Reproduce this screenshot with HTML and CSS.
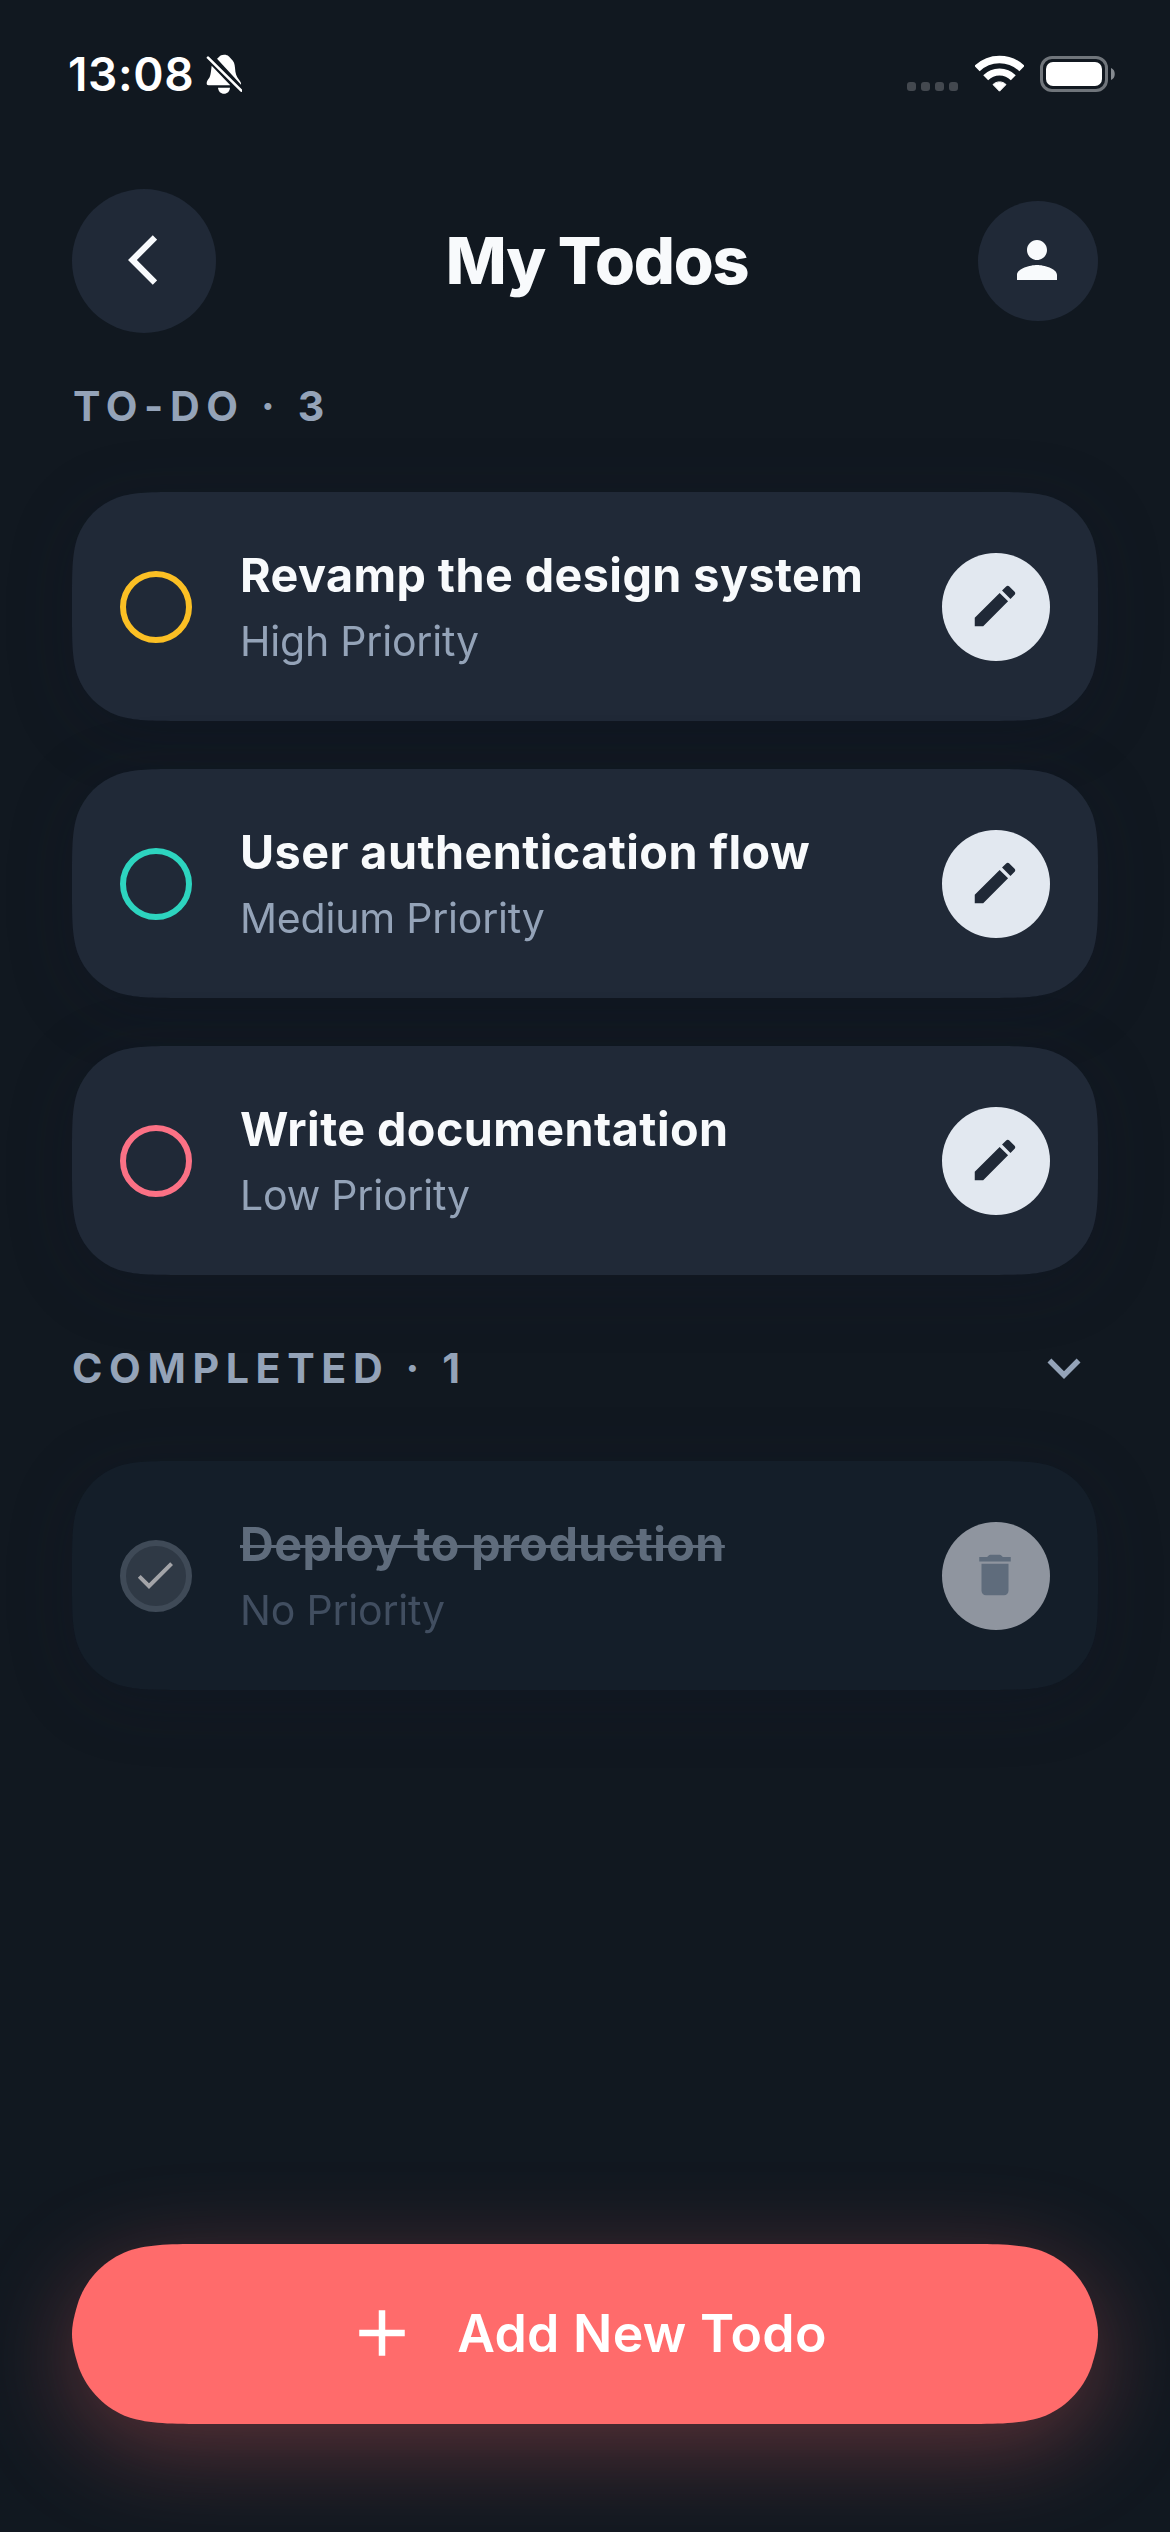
FILE: index.html
```
<!DOCTYPE html>
<html lang="en">
<head>
<meta charset="utf-8">
<title>My Todos</title>
<link rel="stylesheet" href="styles.css">
</head>
<body>
<div class="screen">
  <div class="status-bar">
    <span class="status-time">13:08</span>
    <svg class="status-bell" viewBox="0 0 110 120" fill="#fff">
      <path d="M33 14C39 11 40 2 54 2C68 2 70 9 75 14C84 21 86 30 87 42C88 58 91 68 99 77C104 83 106 88 105 92Z"/>
      <path d="M17 35L73 94H8C3 94 2 91 2 88C2 82 6 77 9 73C15 64 15 48 17 35Z"/>
      <path d="M36 101H72C71 112 64 119 54 119C44 119 37 112 36 101Z"/>
      <path d="M6 11L106 110" fill="none" stroke="#fff" stroke-width="8" stroke-linecap="round"/>
    </svg>
    <div class="status-right">
      <div class="signal"><i></i><i></i><i></i><i></i></div>
      <svg class="wifi" viewBox="0 0 49 37" fill="none" stroke="#fff">
        <path d="M2 13.6A32.2 32.2 0 0 1 47 13.6" stroke-width="7.6"/>
        <path d="M10.7 22.8A19.5 19.5 0 0 1 38.3 22.8" stroke-width="7"/>
        <path d="M24.5 36.2L18 29.6C21.5 26 27.5 26 31 29.6Z" fill="#fff" stroke-width="1" stroke-linejoin="round"/>
      </svg>
      <svg class="battery" viewBox="0 0 76 36">
        <rect x="1.5" y="1.5" width="65" height="33" rx="10.5" fill="none" stroke="#70757b" stroke-width="3"/>
        <rect x="6" y="6" width="56" height="24" rx="7" fill="#fff"/>
        <path d="M71 12C76 13.5 76 22.5 71 24Z" fill="#858a90"/>
      </svg>
    </div>
  </div>

  <header class="header">
    <button class="round-btn back">
      <svg viewBox="0 0 11.67 24"><path d="M11.67 3.87L9.9 2.1 0 12l9.9 9.9 1.77-1.77L3.54 12z"/></svg>
    </button>
    <h1 class="page-title">My Todos</h1>
    <button class="round-btn profile">
      <svg viewBox="0 0 24 24"><path d="M12 12c2.21 0 4-1.79 4-4s-1.79-4-4-4-4 1.79-4 4 1.79 4 4 4zm0 2c-2.67 0-8 1.34-8 4v2h16v-2c0-2.66-5.33-4-8-4z"/></svg>
    </button>
  </header>

  <main class="content">
    <h2 class="section-label">TO-DO · 3</h2>
    <div class="list">
      <article class="card">
        <span class="ring ring-high"></span>
        <div class="card-text">
          <h3 class="card-title">Revamp the design system</h3>
          <p class="card-sub">High Priority</p>
        </div>
        <button class="action"><svg viewBox="0 0 24 24"><path d="M3 17.25V21h3.75L17.81 9.94l-3.75-3.75L3 17.25zM20.71 7.04c.39-.39.39-1.02 0-1.41l-2.34-2.34c-.39-.39-1.02-.39-1.41 0l-1.83 1.83 3.75 3.75 1.83-1.83z"/></svg></button>
      </article>
      <article class="card">
        <span class="ring ring-medium"></span>
        <div class="card-text">
          <h3 class="card-title">User authentication flow</h3>
          <p class="card-sub">Medium Priority</p>
        </div>
        <button class="action"><svg viewBox="0 0 24 24"><path d="M3 17.25V21h3.75L17.81 9.94l-3.75-3.75L3 17.25zM20.71 7.04c.39-.39.39-1.02 0-1.41l-2.34-2.34c-.39-.39-1.02-.39-1.41 0l-1.83 1.83 3.75 3.75 1.83-1.83z"/></svg></button>
      </article>
      <article class="card">
        <span class="ring ring-low"></span>
        <div class="card-text">
          <h3 class="card-title">Write documentation</h3>
          <p class="card-sub">Low Priority</p>
        </div>
        <button class="action"><svg viewBox="0 0 24 24"><path d="M3 17.25V21h3.75L17.81 9.94l-3.75-3.75L3 17.25zM20.71 7.04c.39-.39.39-1.02 0-1.41l-2.34-2.34c-.39-.39-1.02-.39-1.41 0l-1.83 1.83 3.75 3.75 1.83-1.83z"/></svg></button>
      </article>
    </div>

    <div class="section-row">
      <h2 class="section-label">COMPLETED · 1</h2>
      <svg class="chevron" viewBox="0 0 24 24"><path d="M16.59 8.59L12 13.17 7.41 8.59 6 10l6 6 6-6z"/></svg>
    </div>
    <div class="list">
      <article class="card card-done">
        <span class="ring ring-done"><svg viewBox="0 0 24 24"><path d="M9 16.17L4.83 12l-1.42 1.41L9 19 21 7l-1.41-1.41z"/></svg></span>
        <div class="card-text">
          <h3 class="card-title">Deploy to production</h3>
          <p class="card-sub">No Priority</p>
        </div>
        <button class="action"><svg viewBox="0 0 24 24"><path d="M6 19c0 1.1.9 2 2 2h8c1.1 0 2-.9 2-2V7H6v12zM19 4h-3.5l-.7-.7c-.2-.2-.45-.3-.7-.3H9.900c-.25 0-.5.1-.7.3L8.500 4H5v2h14V4z"/></svg></button>
      </article>
    </div>
  </main>

  <footer class="footer">
    <button class="add-btn">
      <svg viewBox="0 0 24 24"><path d="M19 13h-6v6h-2v-6H5v-2h6V5h2v6h6v2z"/></svg>
      <span>Add New Todo</span>
    </button>
  </footer>
</div>
</body>
</html>
```
FILE: styles.css
```
* {
  box-sizing: border-box;
  margin: 0;
  padding: 0;
}

body {
  background: #111820;
  font-family: Inter, "Liberation Sans", sans-serif;
}

button {
  border: 0;
  font: inherit;
}

svg {
  display: block;
  flex: none;
}

.screen {
  display: flex;
  flex-direction: column;
  width: 1170px;
  height: 2532px;
  background: #111820;
  overflow: hidden;
}

/* Status bar */
.status-bar {
  display: flex;
  height: 141px;
  padding: 54px 54px 0 68px;
  color: #fff;
}

.status-time {
  width: 137.5px;
  height: 41px;
  font-size: 46px;
  font-weight: 600;
  line-height: 41px;
  letter-spacing: .6px;
}

.status-bell {
  width: 36.7px;
  height: 40px;
}

.status-right {
  display: flex;
  margin-left: auto;
}

.signal {
  display: flex;
  gap: 5px;
  margin: 28px 16.5px 0 0;
}

.signal i {
  width: 9px;
  height: 9px;
  border-radius: 3px;
  background: #43484f;
}

.wifi {
  width: 49px;
  height: 37px;
  margin: .5px 16.5px 0 0;
}

.battery {
  width: 76px;
  height: 36px;
  margin-top: 2px;
}

/* Header */
.header {
  display: flex;
  align-items: center;
  justify-content: space-between;
  height: 240px;
  padding: 0 72px;
}

.round-btn {
  display: flex;
  align-items: center;
  justify-content: center;
  border-radius: 50%;
  background: #202937;
  fill: #f8fafc;
}

.back {
  width: 144px;
  height: 144px;
  padding: 0 3px 2px 0;
}

.back svg {
  width: 29.2px;
  height: 60px;
}

.profile {
  width: 120px;
  height: 120px;
  padding: 0 2px 2px 0;
}

.profile svg {
  width: 60px;
  height: 60px;
}

.page-title {
  color: #f8fafc;
  font-size: 64.6px;
  font-weight: 800;
  line-height: 80px;
  letter-spacing: -1.25px;
}

/* Lists */
.content {
  padding: 0 72px;
}

.section-label {
  height: 50px;
  color: #94a3b8;
  font-size: 41.2px;
  font-weight: 700;
  line-height: 50px;
  letter-spacing: 6.6px;
}

.content > .section-label {
  padding-left: 1px;
  margin-bottom: 61px;
}

.section-row {
  display: flex;
  align-items: center;
  justify-content: space-between;
  height: 66px;
  margin: 60px 0;
}

.chevron {
  width: 66px;
  height: 66px;
  margin-right: 1px;
  fill: #94a3b8;
}

.list {
  display: flex;
  flex-direction: column;
  gap: 48px;
}

.card {
  position: relative;
  isolation: isolate;
  display: flex;
  align-items: center;
  height: 229px;
  padding: 1px 48px 0;
  filter: drop-shadow(0 12px 30px rgba(15, 18, 38, .25));
}

/* Card surface with continuous corners */
.card::before {
  content: "";
  position: absolute;
  inset: 0;
  z-index: -1;
  background: #202937;
  clip-path: path("M110 0H916C947.6 0 963.5 0 980.5 5.4C999.2 12.2 1013.8 26.8 1020.6 45.5C1026 62.5 1026 78.4 1026 110V119C1026 150.6 1026 166.5 1020.6 183.5C1013.8 202.2 999.2 216.8 980.5 223.6C963.5 229 947.6 229 916 229H110C78.4 229 62.5 229 45.5 223.6C26.8 216.8 12.2 202.2 5.4 183.5C0 166.5 0 150.6 0 119V110C0 78.4 0 62.5 5.4 45.5C12.2 26.8 26.8 12.2 45.5 5.4C62.5 0 78.4 0 110 0Z");
}

.ring {
  display: flex;
  align-items: center;
  justify-content: center;
  width: 72px;
  height: 72px;
  border: 6px solid;
  border-radius: 50%;
}

.ring-high { border-color: #fbbf24; }
.ring-medium { border-color: #2dd4bf; }
.ring-low { border-color: #fb7185; }

.card-text {
  flex: 1;
  padding: 0 0 4px 48px;
}

.card-title {
  color: #f8fafc;
  font-size: 46.7px;
  font-weight: 700;
  line-height: 72px;
  letter-spacing: .43px;
  white-space: nowrap;
}

.card-sub {
  color: #94a3b8;
  font-size: 41px;
  line-height: 60px;
  letter-spacing: -.2px;
}

.action {
  display: flex;
  align-items: center;
  justify-content: center;
  width: 108px;
  height: 108px;
  padding: 0 2px 2px 0;
  border-radius: 50%;
  background: #e2e8f0;
  fill: #202937;
}

.action svg {
  width: 54px;
  height: 54px;
}

/* Completed item */
.card-done::before {
  background: #141e29;
}

.card-done .card-title {
  color: #5f6c7c;
  text-decoration: line-through;
  text-decoration-thickness: 3px;
}

.card-done .card-sub {
  color: #414e60;
}

.card-done .action {
  background: #8f959f;
  fill: #5f6c7c;
}

.ring-done {
  border-color: #3f4a57;
  background: #2f3945;
}

.ring-done svg {
  width: 48px;
  height: 48px;
  margin: 0 2px 2px 0;
  fill: #a3a4a8;
}

/* Add button */
.footer {
  margin-top: auto;
  padding: 0 72px 108px;
}

.add-btn {
  position: relative;
  isolation: isolate;
  display: flex;
  align-items: center;
  justify-content: center;
  gap: 36px;
  width: 100%;
  height: 180px;
  padding-bottom: 2px;
  background: none;
  color: #fff;
  fill: #fff;
  font-size: 51.8px;
  font-weight: 600;
  letter-spacing: .32px;
  filter: drop-shadow(0 24px 48px rgba(255, 107, 107, .32));
}

.add-btn::before {
  content: "";
  position: absolute;
  inset: 0;
  z-index: -1;
  background: #ff6b6b;
  clip-path: path("M137.6 0H888.4C928 0 947.8 0 969.2 6.7C992.5 15.2 1010.8 33.5 1019.3 56.8C1023.7 71 1026 80.3 1026 90C1026 99.7 1023.7 109 1019.3 123.2C1010.8 146.5 992.5 164.8 969.2 173.3C947.8 180 928 180 888.4 180H137.6C98 180 78.2 180 56.8 173.3C33.5 164.8 15.2 146.5 6.7 123.2C2.3 109 0 99.7 0 90C0 80.3 2.3 71 6.7 56.8C15.2 33.5 33.5 15.2 56.8 6.7C78.2 0 98 0 137.6 0Z");
}

.add-btn svg {
  width: 78px;
  height: 78px;
}
```
